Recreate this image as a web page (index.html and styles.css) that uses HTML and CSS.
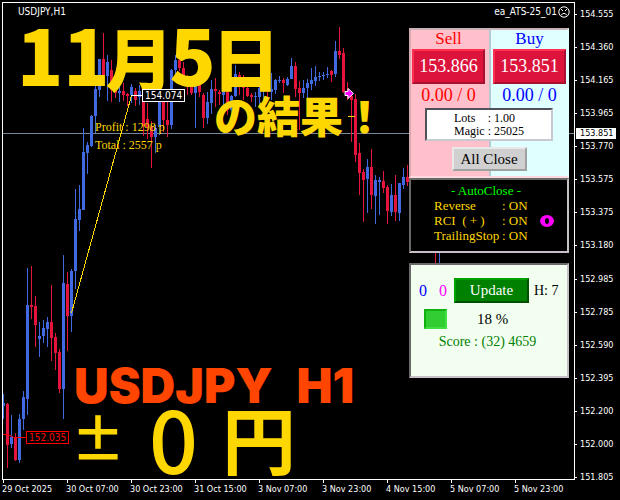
FILE: index.html
```html
<!DOCTYPE html>
<html lang="ja">
<head>
  <meta charset="UTF-8" />
  <title>USDJPY,H1</title>
  <link rel="stylesheet" href="styles.css">
</head>
<body>
  <div class="terminal">
    <main class="chart">
      <svg class="candles" viewBox="3 3 571 476" preserveAspectRatio="none" aria-hidden="true">
        <path class="price-line" d="M3 133.5H574" />
        <g transform="translate(.5 0)">
          <path class="up wick" d="M3 394V419M11 415V448M19 414V463M23 391V430M27 268V415M39 322V357M43 320V343M47 317V347M63 255V419M71 269V332M75 189V289M79 185V231M83 128V210M87 142V174M91 115V147M95 79V133M99 59V97M107 55V101M119 86V102M131 84V103M139 85V105M155 125V153M159 95V135M171 69V129M175 55V80M195 80V128M207 92V124M211 80V114M223 88V105M231 95V120M235 65V97M255 92V107M259 85V105M263 82V100M271 73V100M275 79V94M279 76V83M287 77V86M291 58V79M303 80V98M307 79V100M311 68V90M315 66V86M319 72V81M323 72V80M327 67V78M335 41V77M367 159V213M375 175V224M379 177V215M391 184V216M399 183V221M403 168V189M439 250V265" />
          <path class="up bar" d="M3 403V406M11 437V444M19 419V460M23 397V419M27 305V399M39 336V339M43 328V336M47 322V329M63 283V389M71 271V316M75 219V271M79 209V220M83 152V210M87 145V153M91 116V146M95 89V116M99 59V90M107 62V76M119 91V93M131 87V95M139 91V97M155 128V137M159 100V127M171 70V125M175 60V70M195 85V93M207 102V118M211 89V103M223 90V95M231 96V110M235 74V96M255 96V97M259 88V97M263 86V92M271 89V92M275 80V90M279 80V81M287 79V85M291 66V79M303 88V93M307 83V88M311 80V84M315 77V81M319 76V77M323 75V76M327 74V75M335 51V74M367 167V179M375 180V196M379 180V182M391 195V212M399 183V213M403 177V185" />
          <path class="down wick" d="M7 403V468M15 433V461M31 266V319M35 296V347M51 285V361M55 333V370M59 349V393M67 272V351M103 33V86M111 60V102M115 83V98M123 83V101M127 93V106M135 88V106M143 88V136M147 103V139M151 121V168M163 90V132M167 100V137M179 57V71M183 62V85M187 75V95M191 85V95M199 80V97M203 93V128M215 78V107M219 90V105M227 85V115M239 72V95M243 75V100M247 85V97M251 93V102M267 86V97M283 78V93M295 62V97M299 81V130M331 70V82M339 27V59M343 48V93M347 82V100M351 93V142M355 94V162M359 143V195M363 169V222M371 149V209M383 171V193M387 185V224M395 175V221M407 165V186M435 250V265" />
          <path class="down bar" d="M7 404V445M15 437V460M31 305V307M35 306V325M51 322V338M55 337V353M59 352V389M67 284V316M103 59V75M111 70V90M115 89V93M123 91V95M127 94V96M135 91V100M143 90V126M147 119V127M151 126V137M163 100V120M167 120V125M179 60V68M183 68V80M187 80V87M191 86V93M199 85V92M203 95V118M215 89V91M219 92V94M227 90V110M239 75V80M243 78V88M247 88V96M251 95V97M267 88V92M283 80V83M295 66V89M299 88V93M331 71V75M339 51V55M343 53V92M347 92V94M351 96V100M355 99V155M359 153V173M363 172V180M371 167V195M383 181V188M387 187V211M395 195V212M407 177V182" />
        </g>
        <path class="trade" d="M71.5 313L131.5 95.5M348 116.5H355" />
        <path class="entry" d="M131 95.5H142" />
        <path class="exit" d="M3 434.5H8L14 437.5H26" />
        <path class="arrow" d="M345 91.500h3v-3l5.500 5-5.500 5v-3h-3z" />
      </svg>

      <header class="chart-head">
        <span>USDJPY,H1</span>
        <span class="expert">ea_ATS-25_01
          <svg class="face" viewBox="0 0 12 12" aria-hidden="true">
            <circle cx="6" cy="6" r="5.200" />
            <path d="M3 9.500Q6 5 9 9.500M3 3l2 2M9 3l-2 2" />
          </svg>
        </span>
      </header>

      <h1 class="date"><span class="num">11</span>月<span class="num">5</span>日</h1>
      <p class="subtitle">の結果！</p>
      <span class="tag tag-high">154.074</span>
      <span class="tag tag-low">152.035</span>
      <div class="totals">
        <div>Profit : 1298 p</div>
        <div>Total : 2557 p</div>
      </div>
      <h2 class="pair"><span>USDJPY</span> <span>H1</span></h2>
      <p class="yen"><span class="sign">±</span><span class="zero">0</span><span>円</span></p>

      <aside class="panels">
        <section class="panel trade-panel">
          <div class="quotes">
            <div class="quote sell">
              <div>Sell</div>
              <button>153.866</button>
              <div>0.00 / 0</div>
            </div>
            <div class="quote buy">
              <div>Buy</div>
              <button>153.851</button>
              <div>0.00 / 0</div>
            </div>
          </div>
          <dl class="lots">
            <dt>Lots</dt><dd>: 1.00</dd>
            <dt>Magic</dt><dd>: 25025</dd>
          </dl>
          <button class="close-all">All Close</button>
        </section>

        <section class="panel auto-panel">
          <h3>- AutoClose -</h3>
          <div class="auto-body">
            <dl>
              <dt>Reverse</dt><dd>: ON</dd>
              <dt>RCI&nbsp; ( + )</dt><dd>: ON</dd>
              <dt>TrailingStop</dt><dd>: ON</dd>
            </dl>
            <span class="ring"></span>
          </div>
        </section>

        <section class="panel score-panel">
          <div class="score-top">
            <span class="blue">0</span>
            <span class="pink">0</span>
            <button>Update</button>
            <span class="hour">H: 7</span>
          </div>
          <div class="score-mid">
            <span class="lamp"></span>
            <span>18 %</span>
          </div>
          <div class="score">Score : (32) 4659</div>
        </section>
      </aside>
    </main>

    <div class="price-axis">
      <ul>
        <li>154.555</li>
        <li>154.360</li>
        <li>154.165</li>
        <li>153.965</li>
        <li>153.770</li>
        <li>153.575</li>
        <li>153.375</li>
        <li>153.180</li>
        <li>152.985</li>
        <li>152.785</li>
        <li>152.590</li>
        <li>152.395</li>
        <li>152.200</li>
        <li>152.000</li>
        <li>151.805</li>
      </ul>
      <span class="current">153.851</span>
    </div>

    <ul class="time-axis">
      <li>29 Oct 2025</li>
      <li>30 Oct 07:00</li>
      <li>30 Oct 23:00</li>
      <li>31 Oct 15:00</li>
      <li>3 Nov 07:00</li>
      <li>3 Nov 23:00</li>
      <li>4 Nov 15:00</li>
      <li>5 Nov 07:00</li>
      <li>5 Nov 23:00</li>
    </ul>
  </div>
</body>
</html>
```
FILE: styles.css
```css
* {
  box-sizing: border-box;
}
body {
  margin: 0;
  background: #000;
  color: #fff;
  font-family: "DejaVu Sans Condensed", "DejaVu Sans", sans-serif;
  font-size: 9px;
}
h1, h2, h3, p, ul, dl, dd {
  margin: 0;
  padding: 0;
}
ul {
  list-style: none;
}
button {
  padding: 0;
  font-family: inherit;
  cursor: pointer;
}

.terminal {
  display: grid;
  grid-template-columns: 1fr 45px;
  grid-template-rows: 1fr 20px;
  min-height: 100vh;
  padding: 2px 0 0 2px;
  overflow: hidden;
}
.chart {
  position: relative;
  border: 1px solid #fff;
}

/* candles */
.candles {
  position: absolute;
  top: 0;
  left: 0;
  width: 100%;
  height: 100%;
}
.candles path {
  fill: none;
}
.candles .up {
  stroke: #4169e1;
}
.candles .down {
  stroke: #e4143c;
}
.candles .bar {
  stroke-width: 3;
}
.candles .price-line {
  stroke: #778899;
}
.candles .trade {
  stroke: #ffd700;
  shape-rendering: crispEdges;
}
.candles .entry {
  stroke: #fff;
}
.candles .exit {
  stroke: #f00;
}
.candles .arrow {
  fill: #f0f;
  stroke: #fff;
}

.chart-head {
  position: relative;
  display: flex;
  justify-content: space-between;
  padding: 2px 4px 0 15px;
  font-size: 10px;
  line-height: 14px;
}
.expert {
  display: flex;
  align-items: center;
  gap: 1px;
}
.face {
  width: 12px;
  height: 12px;
  fill: none;
  stroke: #fff;
}

/* order price tags */
.tag {
  position: absolute;
  padding: 0 2px;
  border: 1px solid;
  background: #000;
  font-size: 10px;
  line-height: 11px;
}
.tag-high {
  top: 86px;
  left: 139px;
}
.tag-low {
  top: 428px;
  left: 23px;
  color: #f00;
}

/* captions over the chart */
.date, .subtitle, .yen {
  position: absolute;
  color: #ffd700;
  font-family: "Noto Sans CJK JP", sans-serif;
  font-weight: 900;
  white-space: nowrap;
}
.date {
  top: 10px;
  left: 18px;
  font-size: 68px;
  line-height: 80px;
}
.date .num {
  margin: 0 -4px;
  font-size: 76px;
}
.subtitle {
  top: 83px;
  left: 211px;
  font-size: 43px;
  line-height: 56px;
}
.pair {
  position: absolute;
  top: 355px;
  left: 71px;
  display: flex;
  gap: 24px;
  color: #ff4500;
  font-family: Inter, sans-serif;
  font-size: 48px;
  font-weight: 900;
  line-height: 56px;
}
.yen {
  top: 394px;
  left: 68px;
  display: flex;
  align-items: center;
  gap: 24px;
  font-size: 74px;
  font-weight: 700;
  line-height: 80px;
}
.yen .sign {
  font-size: 54px;
}
.yen .zero {
  font-size: 86px;
  font-weight: 500;
}
.totals {
  position: absolute;
  top: 115px;
  left: 92px;
  color: #ffd700;
  font-family: "Liberation Serif", serif;
  font-size: 12px;
  line-height: 18px;
}

/* expert advisor panels */
.panels {
  position: absolute;
  top: 25px;
  right: 5px;
  width: 160px;
  font-family: "Liberation Serif", serif;
}
.panel {
  border: 2px solid;
  border-color: #696969 #c8c0c8 #c8c0c8 #696969;
}
.trade-panel {
  display: flex;
  flex-direction: column;
  align-items: center;
  height: 150px;
  border-color: #c8b4b8 #e0ffff #ffd8e0 #d8a8b0;
  background: linear-gradient(90deg, #ffc0cb 78px, #b8c8d0 78px, #b8c8d0 80px, #e0ffff 80px);
}
.quotes {
  display: flex;
  justify-content: space-between;
  align-self: stretch;
  padding: 0 1px;
}
.quote {
  width: 73px;
  font-size: 18px;
  line-height: 22px;
  text-align: center;
}
.quote button {
  display: block;
  width: 100%;
  height: 35px;
  margin: -3px 0 0;
  border: 2px solid;
  border-color: #ff3050 #a81030 #a81030 #ff3050;
  background: #dc143c;
  color: #fff;
  font-size: 18px;
}
.sell {
  color: #f00;
}
.buy {
  color: #00f;
}
.quote div:first-child {
  font-size: 17px;
  line-height: 18px;
  padding-bottom: 4px;
}
.lots {
  display: grid;
  grid-template-columns: auto auto;
  justify-content: center;
  column-gap: 3px;
  width: 128px;
  margin-top: 2px;
  padding: 2px 0 1px;
  border: 2px solid;
  border-color: #505058 #c8c8d0 #c8c8d0 #505058;
  background: #fff;
  color: #000;
  font-size: 12px;
  line-height: 13px;
}
.close-all {
  width: 75px;
  height: 24px;
  margin-top: 6px;
  border: 2px solid;
  border-color: #e8e8e8 #a0a0a0 #a0a0a0 #e8e8e8;
  background: #d0d0d0;
  color: #000;
  font-size: 15px;
}
.auto-panel {
  height: 75px;
  background: #000;
  color: #ffd700;
  font-size: 13px;
  line-height: 15px;
}
.auto-panel h3 {
  margin-top: 3px;
  padding-right: 6px;
  color: #0f0;
  font-size: 13px;
  font-weight: 400;
  text-align: center;
}
.auto-body {
  display: flex;
  align-items: center;
  gap: 12px;
  padding-left: 23px;
}
.auto-body dl {
  display: grid;
  grid-template-columns: 68px auto;
}
.ring {
  width: 14px;
  height: 12px;
  border: 4px solid #f0f;
  border-width: 3px 5px;
  border-radius: 50%;
}
.score-panel {
  height: 115px;
  margin-top: 10px;
  padding: 13px 8px 0;
  background: #f2fff0;
  color: #000;
  font-size: 15px;
}
.score-top {
  display: flex;
  align-items: center;
  line-height: 24px;
}
.score-top button {
  width: 75px;
  height: 25px;
  margin-left: 7px;
  border: 2px solid;
  border-color: #00a000 #005000 #005000 #00a000;
  background: #008000;
  color: #fff;
  font-size: 15px;
}
.blue, .pink {
  width: 20px;
  color: #00f;
  font-size: 16px;
}
.pink {
  width: 8px;
  color: #f0f;
}
.hour {
  margin-left: 5px;
  font-size: 14px;
  white-space: nowrap;
}
.score-mid {
  display: flex;
  align-items: center;
  gap: 30px;
  margin-top: 6px;
  padding-left: 5px;
}
.lamp {
  width: 23px;
  height: 20px;
  border: 2px solid;
  border-color: #10b010 #40e040 #40e040 #10b010;
  background: #32cd32;
}
.score {
  margin-top: 4px;
  padding-right: 3px;
  color: #008000;
  font-size: 14px;
  line-height: 18px;
  text-align: center;
}

/* axes */
.price-axis {
  position: relative;
}
.price-axis ul {
  display: flex;
  flex-direction: column;
  justify-content: space-between;
  height: calc(100% + 4px);
  padding-top: 6px;
}
.price-axis li {
  display: flex;
  align-items: center;
  gap: 3px;
  line-height: 13px;
}
.price-axis li::before {
  content: "";
  width: 2px;
  height: 1px;
  background: #fff;
}
.current {
  position: absolute;
  top: 126px;
  left: 1px;
  padding: 0 3px 0 4px;
  background: #fff;
  color: #000;
  line-height: 11px;
}
.time-axis {
  grid-column: 1 / -1;
  display: grid;
  grid-template-columns: repeat(9, 64px);
}
.time-axis li {
  white-space: nowrap;
  line-height: 12px;
}
.time-axis li::before {
  content: "";
  display: block;
  width: 1px;
  height: 3px;
  margin-left: 1px;
  background: #fff;
}
```
